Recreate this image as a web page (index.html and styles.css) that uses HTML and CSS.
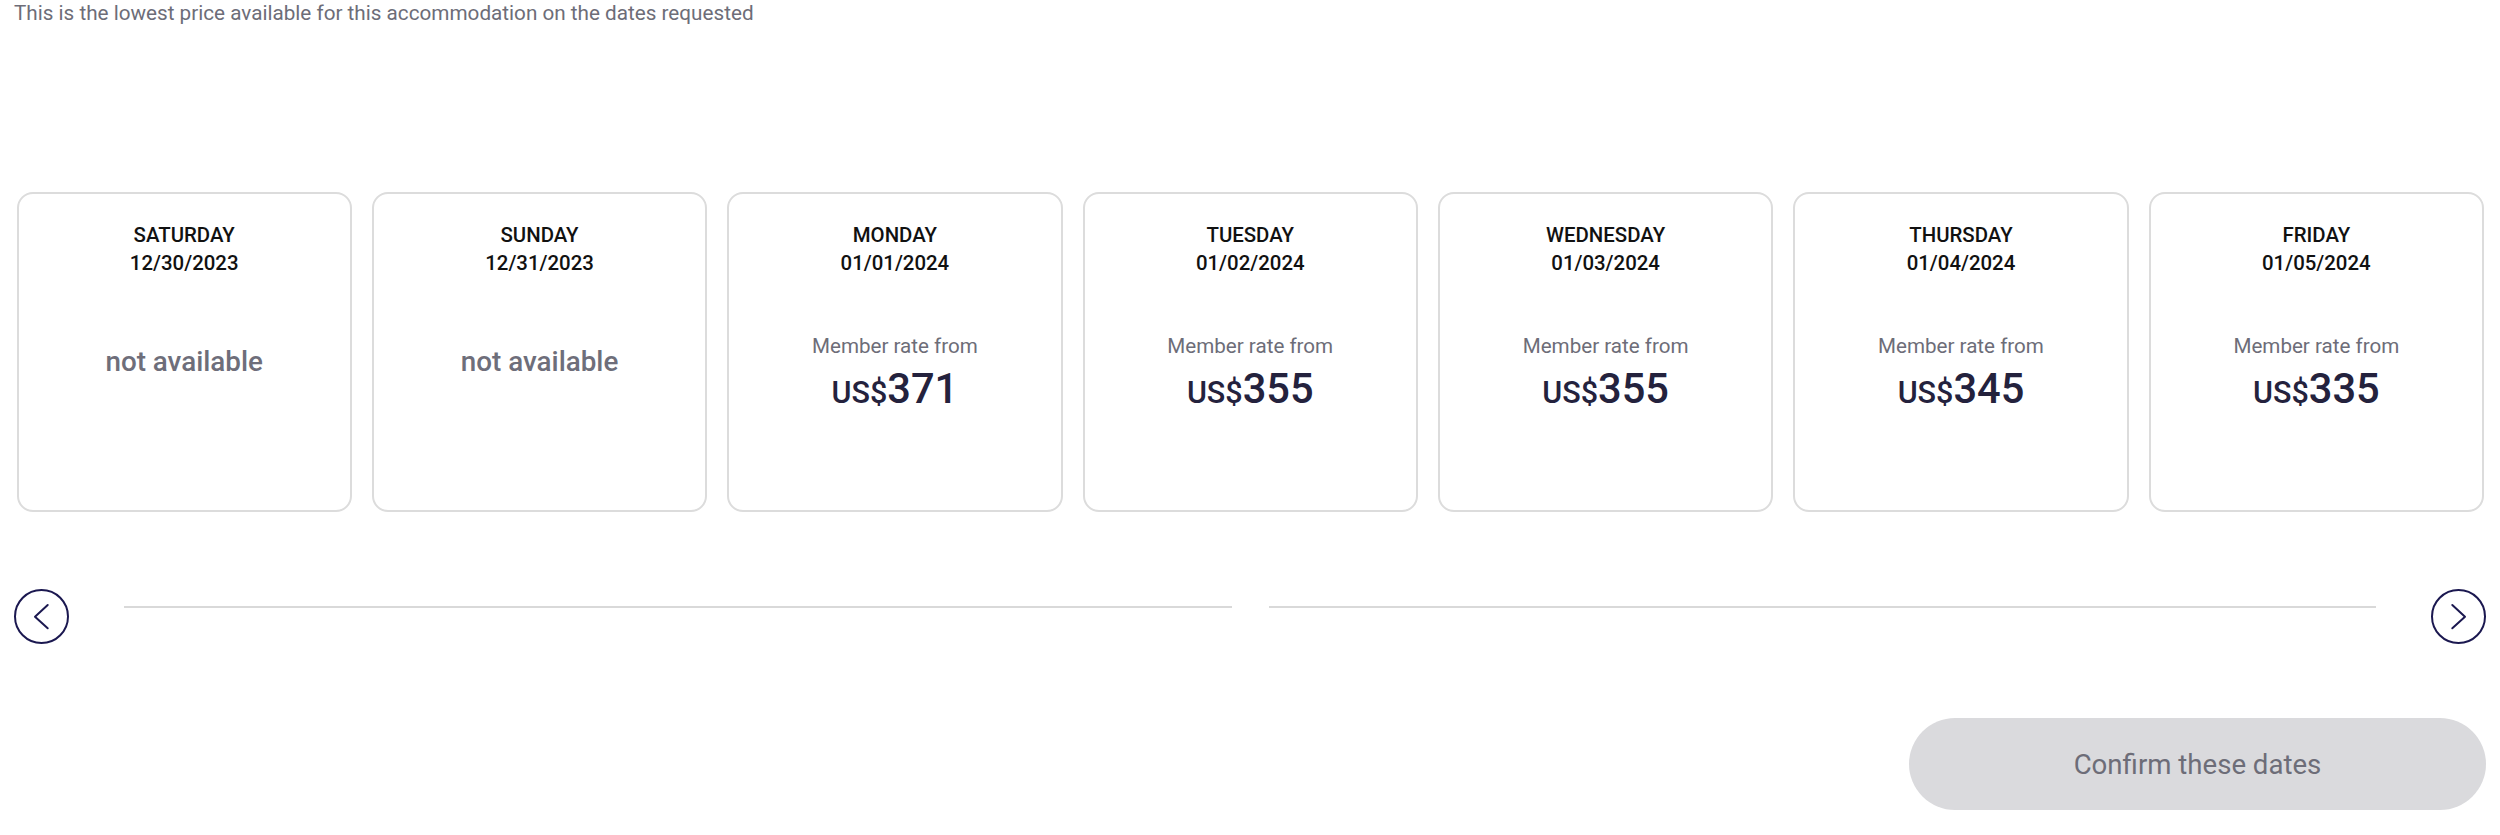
FILE: index.html
```html
<!DOCTYPE html>
<html lang="en">
<head>
<meta charset="utf-8">
<title>Date selection</title>
<link rel="stylesheet" href="styles.css">
</head>
<body>
<div class="page">
  <p class="note">This is the lowest price available for this accommodation on the dates requested</p>

  <div class="cards">
    <div class="card">
      <div class="card-head"><div>SATURDAY</div><div>12/30/2023</div></div>
      <div class="na">not available</div>
    </div>
    <div class="card">
      <div class="card-head"><div>SUNDAY</div><div>12/31/2023</div></div>
      <div class="na">not available</div>
    </div>
    <div class="card">
      <div class="card-head"><div>MONDAY</div><div>01/01/2024</div></div>
      <div class="rate-label">Member rate from</div>
      <div class="price"><span class="cur">US$</span>371</div>
    </div>
    <div class="card">
      <div class="card-head"><div>TUESDAY</div><div>01/02/2024</div></div>
      <div class="rate-label">Member rate from</div>
      <div class="price"><span class="cur">US$</span>355</div>
    </div>
    <div class="card">
      <div class="card-head"><div>WEDNESDAY</div><div>01/03/2024</div></div>
      <div class="rate-label">Member rate from</div>
      <div class="price"><span class="cur">US$</span>355</div>
    </div>
    <div class="card">
      <div class="card-head"><div>THURSDAY</div><div>01/04/2024</div></div>
      <div class="rate-label">Member rate from</div>
      <div class="price"><span class="cur">US$</span>345</div>
    </div>
    <div class="card">
      <div class="card-head"><div>FRIDAY</div><div>01/05/2024</div></div>
      <div class="rate-label">Member rate from</div>
      <div class="price"><span class="cur">US$</span>335</div>
    </div>
  </div>

  <div class="nav">
    <button class="circle" aria-label="Previous">
      <svg viewBox="0 0 51 51" width="51" height="51"><polyline points="31.7,14 19,25.7 31.7,37.3" fill="none" stroke="#1b1850" stroke-width="2" stroke-linecap="round" stroke-linejoin="round"/></svg>
    </button>
    <div class="track">
      <span class="seg"></span>
      <span class="seg"></span>
    </div>
    <button class="circle" aria-label="Next">
      <svg viewBox="0 0 51 51" width="51" height="51"><polyline points="19.3,14 32,25.7 19.3,37.3" fill="none" stroke="#1b1850" stroke-width="2" stroke-linecap="round" stroke-linejoin="round"/></svg>
    </button>
  </div>

  <div class="actions">
    <button class="confirm">Confirm these dates</button>
  </div>
</div>
</body>
</html>
```

FILE: styles.css
```css
* { box-sizing: border-box; }

html, body {
  margin: 0;
  padding: 0;
  background: #ffffff;
  font-family: Roboto, "Liberation Sans", Arial, sans-serif;
}

.page {
  padding: 0 14px;
}

.note {
  margin: 0;
  font-size: 20.7px;
  line-height: 26px;
  color: #6d6d78;
}

.cards {
  display: flex;
  gap: 20px;
  margin: 166px 2px 0 2.5px;
}

.card {
  flex: 1 1 0;
  height: 320px;
  border: 2px solid #dcdcdc;
  border-radius: 16px;
  padding-top: 27px;
  text-align: center;
}

.card-head {
  font-size: 20.4px;
  line-height: 28px;
  font-weight: 500;
  color: #111111;
}

.na {
  margin-top: 69px;
  font-size: 27.8px;
  line-height: 32px;
  font-weight: 500;
  color: #6e6e7a;
}

.rate-label {
  margin-top: 56px;
  font-size: 20.6px;
  line-height: 26px;
  color: #6d6d78;
}

.price {
  margin-top: 6px;
  font-size: 41.6px;
  line-height: 48px;
  font-weight: 500;
  color: #24223d;
}

.price .cur {
  font-size: 30.5px;
}

.nav {
  display: flex;
  align-items: flex-start;
  gap: 55px;
  margin-top: 77px;
}

.circle {
  flex: 0 0 55px;
  width: 55px;
  height: 55px;
  padding: 0;
  border: 2px solid #1b1850;
  border-radius: 50%;
  background: #ffffff;
  display: flex;
  align-items: center;
  justify-content: center;
}

.circle svg { display: block; }

.track {
  flex: 1 1 auto;
  display: flex;
  gap: 37px;
  margin-top: 17px;
}

.seg {
  flex: 1 1 0;
  height: 2px;
  background: #d9d9d9;
}

.actions {
  display: flex;
  justify-content: flex-end;
  margin-top: 74px;
}

.confirm {
  width: 577px;
  height: 92px;
  border: none;
  border-radius: 46px;
  background: #dadadd;
  color: #6d6d78;
  font-family: Roboto, "Liberation Sans", Arial, sans-serif;
  font-size: 27.6px;
  padding: 0;
}
```
